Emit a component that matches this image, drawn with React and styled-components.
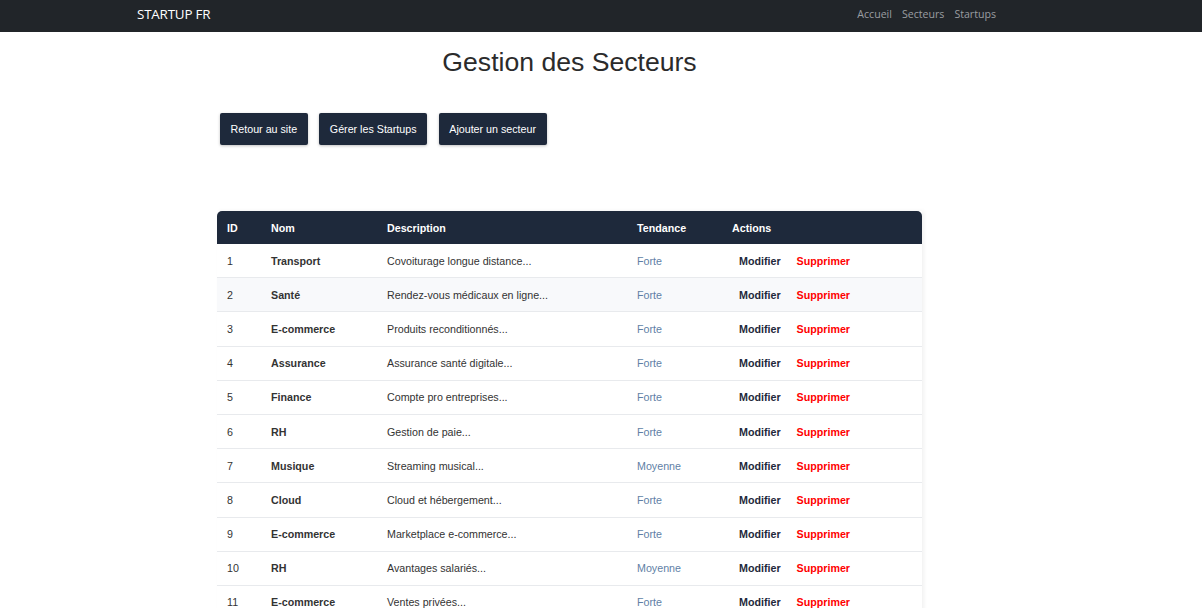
import React from 'react';
import styled, { createGlobalStyle } from 'styled-components';

const GlobalStyle = createGlobalStyle`
  body {
    margin: 0;
    background: #ffffff;
    font-family: 'Liberation Sans', Arial, sans-serif;
    color: #333333;
  }
`;

const Navbar = styled.nav`
  height: 32px;
  background-color: #212529;
  display: flex;
  align-items: center;
  justify-content: space-between;
  padding: 0 206px 0 137px;
  font-family: 'Open Sans', 'DejaVu Sans', sans-serif;
`;

const Brand = styled.div`
  color: #ffffff;
  font-size: 13.4px;
  letter-spacing: -0.2px;
  margin-top: -5px;
`;

const NavLinks = styled.div`
  display: flex;
  gap: 10px;
  margin-top: -5px;
`;

const NavLink = styled.a`
  color: #9a9da1;
  font-size: 10.6px;
  text-decoration: none;
`;

const Main = styled.main`
  width: 705px;
  margin-left: 217px;
`;

const Title = styled.h1`
  margin: 14px 0 0;
  text-align: center;
  font-size: 26.6px;
  font-weight: 400;
  color: #2b2b2b;
  line-height: 32px;
`;

const Toolbar = styled.div`
  display: flex;
  gap: 11.5px;
  margin: 35px 0 0 3px;
`;

const Button = styled.button`
  height: 32px;
  padding: 0 10.6px;
  background-color: #1e293b;
  color: #ffffff;
  border: none;
  border-radius: 2px;
  font-family: 'Liberation Sans', Arial, sans-serif;
  font-size: 10.7px;
  box-shadow: 0 1px 3px rgba(0, 0, 0, 0.25);
`;

const Table = styled.table`
  margin-top: 66px;
  width: 100%;
  table-layout: fixed;
  border-collapse: separate;
  border-spacing: 0;
  font-size: 10.7px;
  box-shadow: 2px 0 4px rgba(0, 0, 0, 0.06);
`;

const Th = styled.th`
  box-sizing: border-box;
  background-color: #1e293b;
  color: #ffffff;
  font-weight: 700;
  text-align: left;
  height: 33px;
  padding: 0 0 0 ${(p) => p.$pad || 0}px;
  width: ${(p) => (p.$w ? `${p.$w}px` : 'auto')};
  &:first-child { border-top-left-radius: 5px; }
  &:last-child { border-top-right-radius: 5px; }
`;

const Tr = styled.tr`
  background-color: ${(p) => (p.$striped ? '#f8f9fb' : '#ffffff')};
`;

const Td = styled.td`
  height: 33.2px;
  padding: 0 0 0 ${(p) => p.$pad || 0}px;
  border-bottom: 1px solid #e8eaed;
  color: ${(p) => p.$color || '#333333'};
  font-weight: ${(p) => (p.$bold ? 700 : 400)};
  white-space: nowrap;
`;

const ActionLink = styled.a`
  font-weight: 700;
  text-decoration: none;
  color: ${(p) => (p.$danger ? '#ff0000' : '#1e293b')};
  margin-left: ${(p) => p.$ml}px;
`;

const rows = [
  [1, 'Transport', 'Covoiturage longue distance...', 'Forte'],
  [2, 'Santé', 'Rendez-vous médicaux en ligne...', 'Forte'],
  [3, 'E-commerce', 'Produits reconditionnés...', 'Forte'],
  [4, 'Assurance', 'Assurance santé digitale...', 'Forte'],
  [5, 'Finance', 'Compte pro entreprises...', 'Forte'],
  [6, 'RH', 'Gestion de paie...', 'Forte'],
  [7, 'Musique', 'Streaming musical...', 'Moyenne'],
  [8, 'Cloud', 'Cloud et hébergement...', 'Forte'],
  [9, 'E-commerce', 'Marketplace e-commerce...', 'Forte'],
  [10, 'RH', 'Avantages salariés...', 'Moyenne'],
  [11, 'E-commerce', 'Ventes privées...', 'Forte'],
];

export default function App() {
  return (
    <>
      <GlobalStyle />
      <Navbar>
        <Brand>STARTUP FR</Brand>
        <NavLinks>
          <NavLink>Accueil</NavLink>
          <NavLink>Secteurs</NavLink>
          <NavLink>Startups</NavLink>
        </NavLinks>
      </Navbar>
      <Main>
        <Title>Gestion des Secteurs</Title>
        <Toolbar>
          <Button>Retour au site</Button>
          <Button>Gérer les Startups</Button>
          <Button>Ajouter un secteur</Button>
        </Toolbar>
        <Table>
          <thead>
            <tr>
              <Th $pad={10} $w={54}>ID</Th>
              <Th $w={116}>Nom</Th>
              <Th $w={250}>Description</Th>
              <Th $w={95}>Tendance</Th>
              <Th>Actions</Th>
            </tr>
          </thead>
          <tbody>
            {rows.map(([id, nom, desc, tend]) => (
              <Tr key={id} $striped={id === 2}>
                <Td $pad={10}>{id}</Td>
                <Td $bold>{nom}</Td>
                <Td>{desc}</Td>
                <Td $color="#5f7fa6">{tend}</Td>
                <Td>
                  <ActionLink $ml={7}>Modifier</ActionLink>
                  <ActionLink $danger $ml={16}>Supprimer</ActionLink>
                </Td>
              </Tr>
            ))}
          </tbody>
        </Table>
      </Main>
    </>
  );
}
